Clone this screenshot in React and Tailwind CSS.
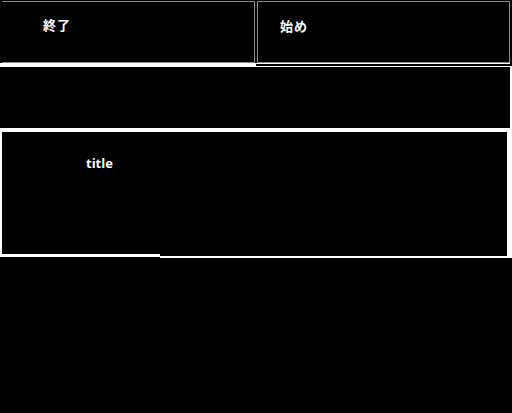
import React from "react";

const cjk = { fontFamily: '"Noto Sans CJK JP", "Noto Sans", sans-serif' };
const latin = { fontFamily: '"Open Sans", "DejaVu Sans", sans-serif' };

export default function App() {
  return (
    <div className="w-[512px] h-[413px] bg-black overflow-hidden">
      {/* Top buttons */}
      <div className="flex h-[63px]">
        <div className="w-[256px] pt-px pl-[2px] pr-px">
          <div
            className="h-[62px] border border-l-0 border-[#8a8a8a] pl-[41px] pt-[15px] text-white text-[13px] font-bold leading-[16px] tracking-[1px]"
            style={cjk}
          >
            終了
          </div>
        </div>
        <div className="w-[256px] pt-px pl-px pr-[2px]">
          <div
            className="h-[62px] border border-[#8a8a8a] pl-[22px] pt-[16px] text-white text-[13px] font-bold leading-[16px] tracking-[1px]"
            style={cjk}
          >
            始め
          </div>
        </div>
      </div>

      {/* Divider */}
      <div className="flex">
        <div className="w-[256px] h-[4px] bg-white" />
        <div className="flex-1 flex flex-col">
          <div className="h-px bg-white mr-[2px]" />
          <div className="h-[2px] bg-black" />
          <div className="h-px bg-white" />
        </div>
      </div>

      {/* Middle panel */}
      <div className="flex h-[61px]">
        <div className="flex-1 bg-black" />
        <div className="w-[2px] bg-white" />
      </div>

      {/* Title panel */}
      <div className="bg-white pt-[4px] pl-[2px] pr-[5px]">
        <div className="h-[122px] bg-black pl-[84px] pt-[18px]">
          <span className="text-white text-[13px] font-bold leading-[16px]" style={latin}>
            title
          </span>
        </div>
      </div>
      <div className="flex h-[4px]">
        <div className="w-[160px] flex flex-col">
          <div className="h-[3px] bg-white" />
        </div>
        <div className="flex-1 flex flex-col">
          <div className="h-[2px] flex">
            <div className="flex-1 bg-black" />
            <div className="w-[5px] bg-white" />
          </div>
          <div className="h-[2px] bg-white" />
        </div>
      </div>
    </div>
  );
}
